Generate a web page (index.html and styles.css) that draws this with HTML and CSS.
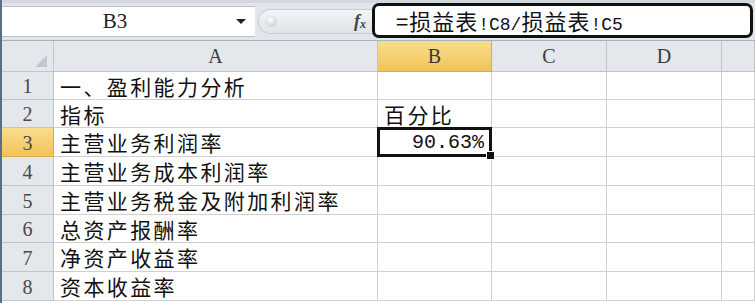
FILE: index.html
```html
<!DOCTYPE html>
<html lang="zh-CN">
<head>
<meta charset="UTF-8">
<title>损益表分析</title>
<link rel="stylesheet" href="styles.css">
</head>
<body>

<!-- formula bar -->
<div class="fbar">
    <div class="namebox">
        <span class="name">B3</span>
        <span class="arrow"></span>
    </div>
    <div class="groove"><span class="knob"></span><span class="fx">f<sub>x</sub></span></div>
    <div class="formula">=损益表<span class="mono">!C8/</span>损益表<span class="mono">!C5</span></div>
</div>

<!-- sheet -->
<div class="sheet">
    <div class="hd corner"></div>
    <div class="hd col">A</div>
    <div class="hd col on">B</div>
    <div class="hd col">C</div>
    <div class="hd col">D</div>
    <div class="hd col"></div>

    <div class="hd row">1</div><div class="c">一、盈利能力分析</div><div class="c"></div><div class="c"></div><div class="c"></div><div class="c"></div>
    <div class="hd row">2</div><div class="c">指标</div><div class="c">百分比</div><div class="c"></div><div class="c"></div><div class="c"></div>
    <div class="hd row on">3</div><div class="c">主营业务利润率</div><div class="c num sel">90.63%</div><div class="c"></div><div class="c"></div><div class="c"></div>
    <div class="hd row">4</div><div class="c">主营业务成本利润率</div><div class="c"></div><div class="c"></div><div class="c"></div><div class="c"></div>
    <div class="hd row">5</div><div class="c">主营业务税金及附加利润率</div><div class="c"></div><div class="c"></div><div class="c"></div><div class="c"></div>
    <div class="hd row">6</div><div class="c">总资产报酬率</div><div class="c"></div><div class="c"></div><div class="c"></div><div class="c"></div>
    <div class="hd row">7</div><div class="c">净资产收益率</div><div class="c"></div><div class="c"></div><div class="c"></div><div class="c"></div>
    <div class="hd row">8</div><div class="c">资本收益率</div><div class="c"></div><div class="c"></div><div class="c"></div><div class="c"></div>
</div>

</body>
</html>
```

FILE: styles.css
```css
/* spreadsheet look */
body {
    margin: 0;
    width: 755px;
    height: 303px;
    overflow: hidden;
    background: #fff;
    border-left: 2px solid #5d6f86;
    box-sizing: border-box;
    font-family: "Noto Sans CJK SC", sans-serif;
}
.fbar {
    height: 41px;
    display: flex;
    align-items: center;
    background: #e2e6eb;
    border-top: 3px solid #d3d8df;
    border-bottom: 1px solid #a7b1bd;
    box-sizing: border-box;
}
.namebox {
    width: 253px;
    height: 31px;
    background: #fff;
    border-top: 1px solid #b9c1cc;
    border-bottom: 1px solid #b9c1cc;
    box-sizing: border-box;
    display: flex;
    align-items: center;
}
.name {
    width: 226px;
    text-align: center;
    font-family: "Liberation Serif", serif;
    font-size: 21px;
    color: #222;
}
.arrow {
    width: 0;
    height: 0;
    border-left: 5px solid transparent;
    border-right: 5px solid transparent;
    border-top: 5px solid #222;
    margin-left: 8px;
}
.groove {
    width: 114px;
    height: 25px;
    margin-left: 3px;
    border-radius: 13px 0 0 13px;
    background: linear-gradient(#f4f5f7, #dfe3e8);
    border: 1px solid #c6ccd4;
    border-right: none;
    display: flex;
    align-items: center;
    box-sizing: border-box;
}
.knob {
    width: 11px;
    height: 11px;
    border-radius: 50%;
    background: radial-gradient(circle at 40% 35%, #fff, #b9bec5);
    margin-left: 7px;
}
.fx {
    margin-left: auto;
    margin-right: 6px;
    font-family: "Liberation Serif", serif;
    font-style: italic;
    font-weight: bold;
    font-size: 18px;
    color: #444;
}
.fx sub {
    font-size: 12px;
    vertical-align: -1px;
}
.formula {
    flex: 1;
    height: 35px;
    margin-right: 2px;
    margin-top: -3px;
    border: 3px solid #111;
    border-radius: 7px;
    background: #fff;
    box-sizing: border-box;
    padding-left: 21px;
    font-size: 22px;
    line-height: 28px;
    letter-spacing: 1px;
    color: #111;
    white-space: pre;
}
.mono {
    font-family: "Liberation Mono", monospace;
    font-size: 18px;
    letter-spacing: 0;
}
.sheet {
    display: grid;
    grid-template-columns: 52px 324px 114px 115px 115px 1fr;
    grid-template-rows: 31px 28px 28px 29px 29px 29px 28px 29px 29px;
}
.c, .hd {
    box-sizing: border-box;
    border-right: 1px solid #d0d0d0;
    border-bottom: 1px solid #d0d0d0;
}
.hd {
    background: #e4e7eb;
    border-color: #bfc5cd;
    font-family: "Liberation Serif", serif;
    font-size: 20px;
    color: #3a3a3a;
    display: flex;
    align-items: center;
    justify-content: center;
}
.hd.row {
    color: #4a4a4a;
    padding-top: 2px;
}
.hd.on {
    background: linear-gradient(#f9dd8e, #f1c359);
    border-color: #d6ad4f;
}
.corner {
    position: relative;
}
.corner::after {
    content: "";
    position: absolute;
    right: 6px;
    bottom: 4px;
    border-left: 12px solid transparent;
    border-bottom: 12px solid #c3c8cf;
}
.c {
    font-size: 21px;
    letter-spacing: 2.4px;
    color: #111;
    padding-left: 6px;
    line-height: 26px;
    padding-top: 1px;
    white-space: nowrap;
}
.num {
    font-family: "Liberation Mono", monospace;
    font-size: 20px;
    letter-spacing: 0;
    text-align: right;
    padding-right: 7px;
}
.sel {
    position: relative;
    line-height: 27px;
}
.sel::before {
    content: "";
    position: absolute;
    left: -1px;
    top: -1px;
    right: -1px;
    bottom: -1px;
    border: 3px solid #111;
}
.sel::after {
    content: "";
    position: absolute;
    right: -4px;
    bottom: -4px;
    width: 7px;
    height: 7px;
    background: #111;
    border: 1px solid #fff;
}
```
